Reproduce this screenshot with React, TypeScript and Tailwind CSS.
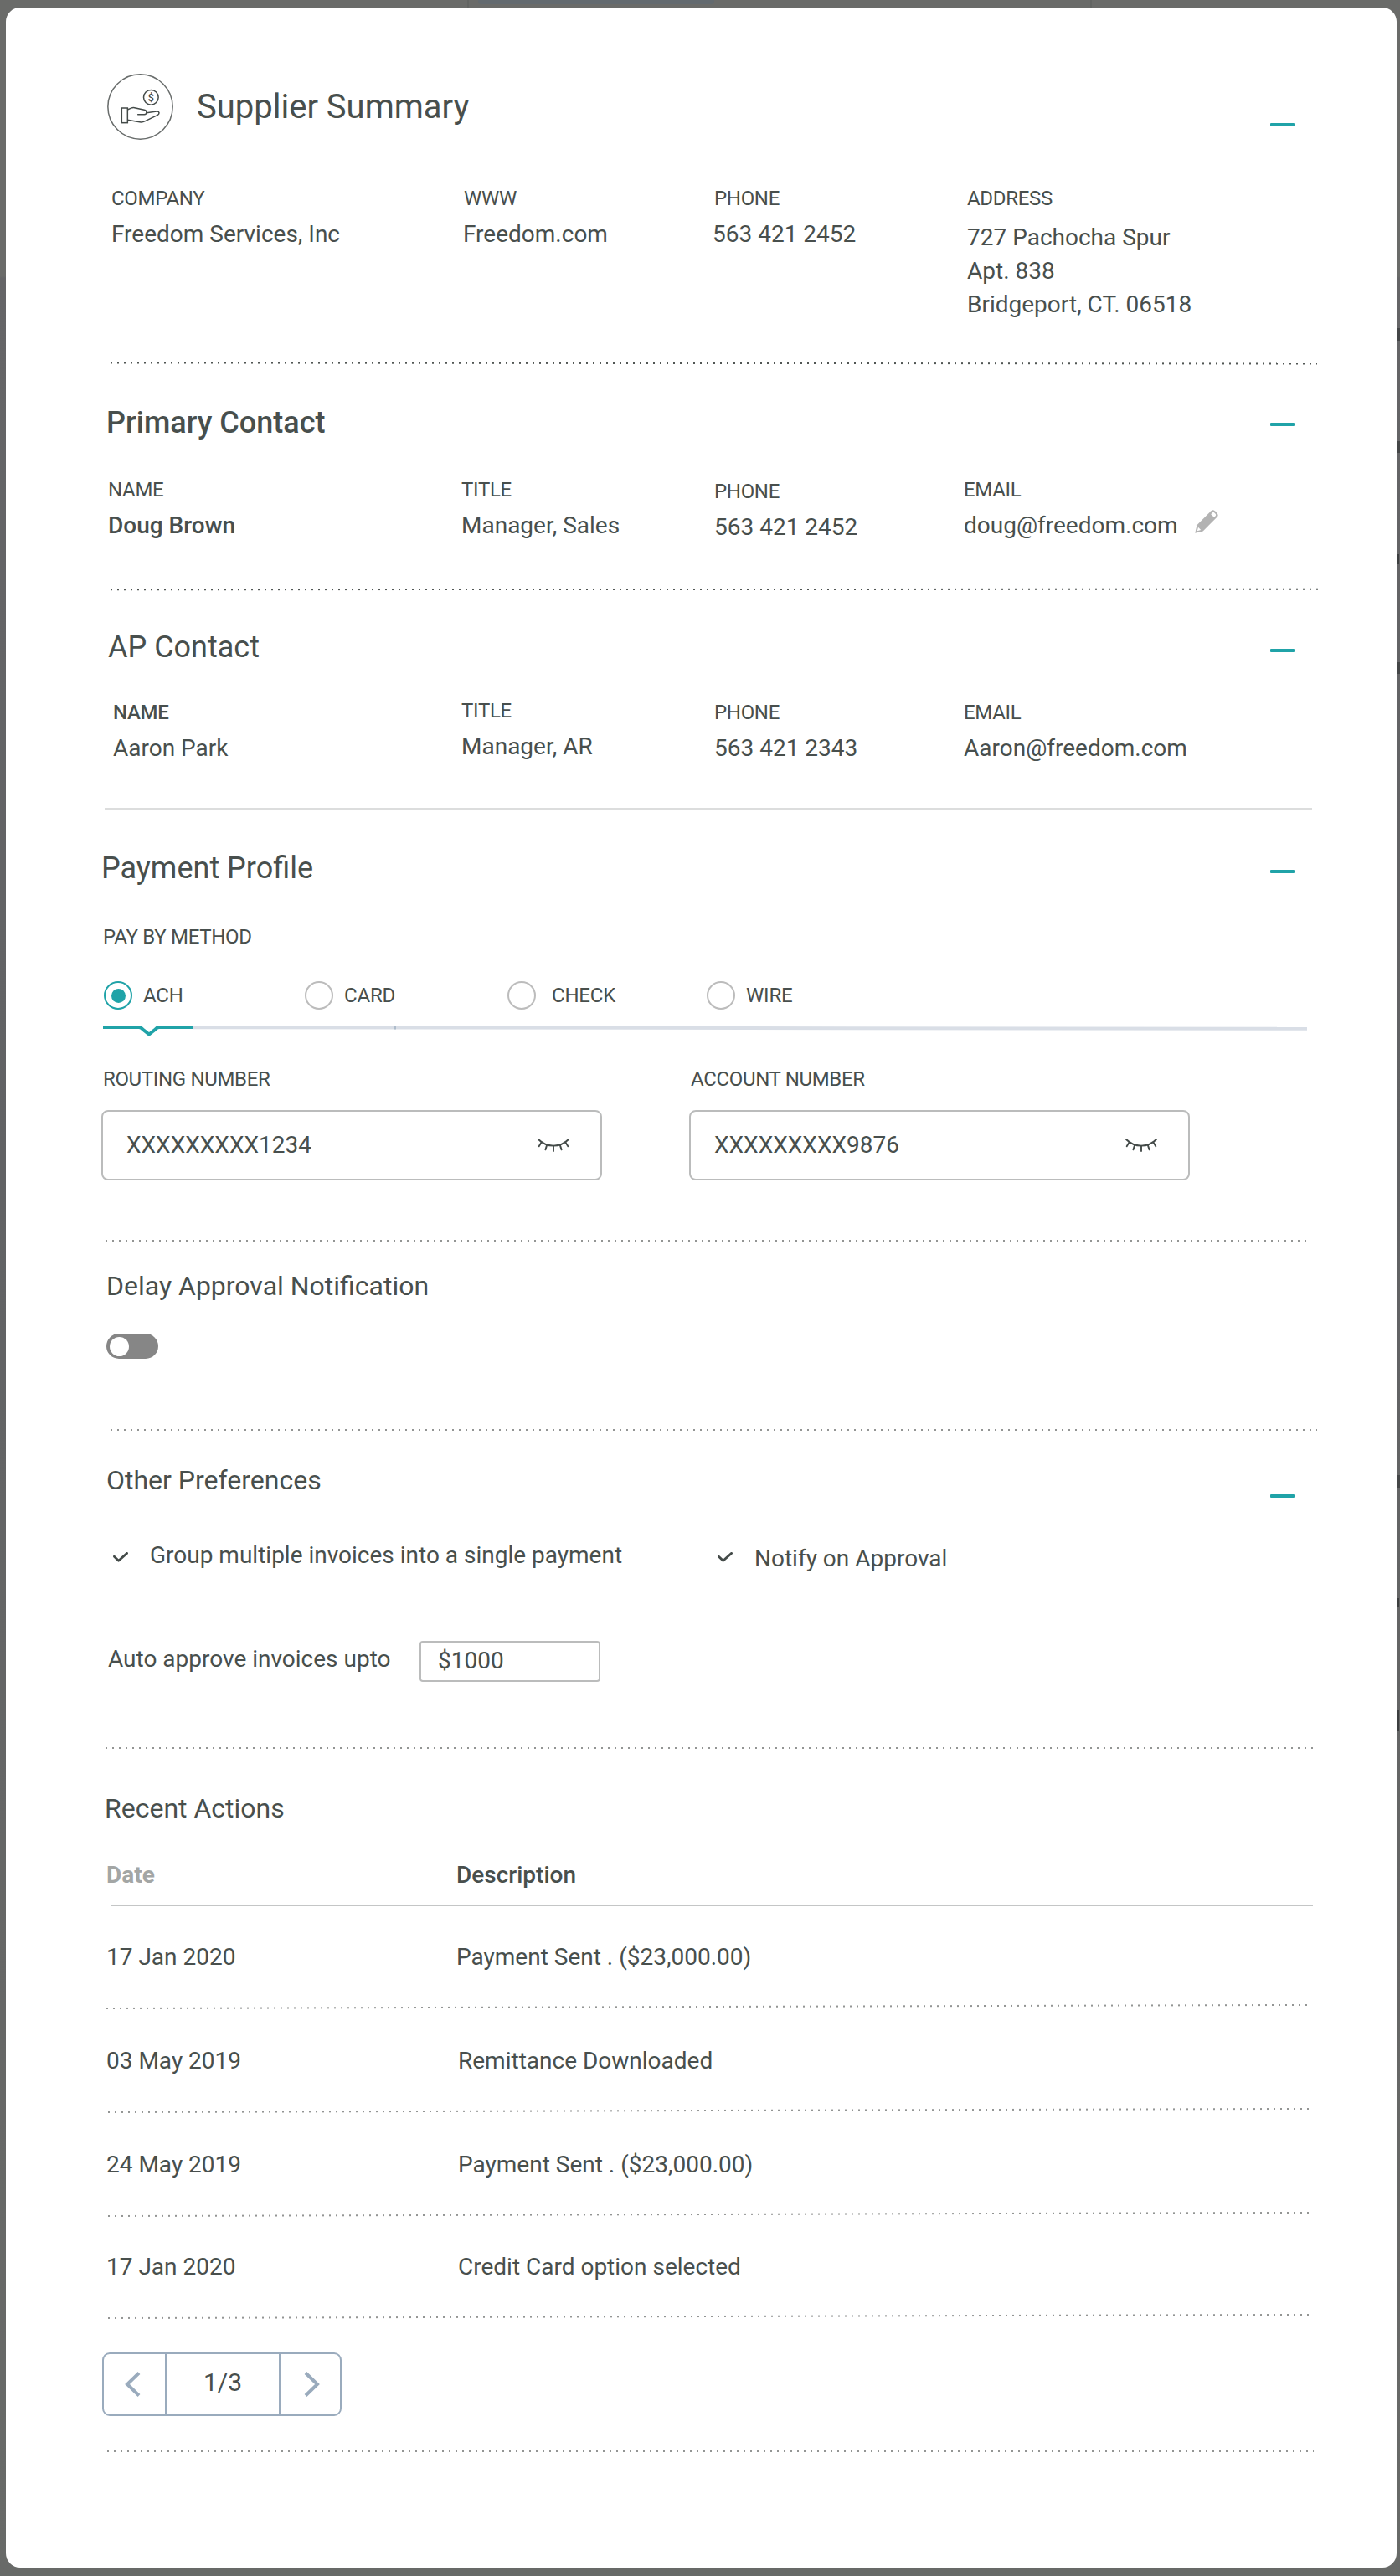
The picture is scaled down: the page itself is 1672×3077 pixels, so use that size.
import type { ReactNode } from "react";

const dark =
  "bg-[repeating-linear-gradient(90deg,#515654_0_2px,transparent_2px_8px)]";
const light =
  "bg-[repeating-linear-gradient(90deg,#939594_0_2px,transparent_2px_8px)]";

function Dots({ className }: { className: string }) {
  return <div className={`h-[2px] shrink-0 ${className}`} />;
}

function Minus({ className }: { className: string }) {
  return (
    <button
      aria-label="Collapse"
      className={`mr-[121px] ml-auto block h-1 w-[30px] rounded-[1px] bg-[#20a3a8] ${className}`}
    />
  );
}

function Field({
  label,
  children,
  className = "",
  labelClass = "",
  valueClass = "",
}: {
  label: string;
  children: ReactNode;
  className?: string;
  labelClass?: string;
  valueClass?: string;
}) {
  return (
    <div className={className}>
      <div className={`text-[24px] leading-[28px] tracking-[-0.3px] ${labelClass}`}>{label}</div>
      <div className={`mt-[9px] text-[28px] leading-[40px] ${valueClass}`}>{children}</div>
    </div>
  );
}

function HandCoin() {
  return (
    <svg className="h-[79px] w-[79px] shrink-0" viewBox="55 53 237 237" fill="none" stroke="#444b49" strokeWidth="4.5">
      <circle cx="173.5" cy="171.5" r="116" stroke="#686c6b" />
      <rect x="107" y="176" width="21" height="53" />
      <path
        d="M128 182 Q138 178 145 175 Q149 174 153 175 L188 183 Q197 185 196 193 L232 188 Q240 187 241 193 Q241 198 236 201 L191 223 Q184 227 176 227 L128 219"
        strokeLinejoin="round"
      />
      <path d="M165 199 H188 Q196 199 196 192" strokeLinecap="round" />
      <circle cx="212" cy="138" r="26.5" />
      <text
        x="212"
        y="151"
        textAnchor="middle"
        fontSize="38"
        fontFamily="Roboto, sans-serif"
        fontWeight="500"
        fill="#444b49"
        stroke="none"
      >
        $
      </text>
    </svg>
  );
}

function Pencil() {
  return (
    <svg className="h-7 w-7" viewBox="0 0 28 28">
      <path
        d="M.3 27.7 2.4 18.2 19.4 1.3Q21.5-.6 23.8 1.3L26.6 4.1Q28.6 6.4 26.6 8.6L9.7 25.5Z"
        fill="#b3b3b3"
      />
      <path d="M19.2 5.2 21 3.3Q22.1 2.4 23.1 3.3L24.8 4.9Q25.6 6 24.8 7L23 8.9Z" fill="#fff" />
      <path d="M2.8 25.3 4 20.8 7.2 24.1Z" fill="#fff" />
    </svg>
  );
}

function ClosedEye() {
  return (
    <svg
      className="h-4 w-[38px]"
      viewBox="0 0 38 16"
      fill="none"
      stroke="#444b49"
      strokeWidth="1.9"
      strokeLinecap="round"
    >
      <path d="M1 1Q8.5 8.6 19 8.6T37 1" />
      <path d="M4.6 4.4 1.7 9.2M11.2 7.6 9.4 13.4M19 8.6V15M26.8 7.6 28.6 13.4M33.4 4.4 36.3 9.2" />
    </svg>
  );
}

function Check({ className }: { className: string }) {
  return (
    <svg className={`h-3 w-[18px] shrink-0 ${className}`} viewBox="0 0 18 12" fill="none" stroke="#444b49" strokeWidth="2.8">
      <path d="M1.400 5.200 6.600 10.200 16.600 1.400" strokeLinejoin="round" strokeLinecap="round" />
    </svg>
  );
}

function Radio({ label, checked, className, gap }: { label: string; checked?: boolean; className: string; gap: string }) {
  return (
    <label className={`flex h-[34px] items-center ${className}`}>
      <span
        className={`flex h-[34px] w-[34px] items-center justify-center rounded-full border-2 ${
          checked ? "border-[#20a3a8]" : "border-[#bcbcbc]"
        }`}
      >
        {checked && <span className="h-[17px] w-[17px] rounded-full bg-[#20a3a8]" />}
      </span>
      <span className={`text-[24px] leading-[34px] tracking-[-0.2px] ${gap}`}>{label}</span>
    </label>
  );
}

function SecretInput({ label, value, labelClass }: { label: string; value: string; labelClass: string }) {
  return (
    <div className="w-[598px]">
      <div className={`text-[24px] leading-[28px] tracking-[-0.34px] ${labelClass}`}>{label}</div>
      <div className="mt-[23px] flex h-[84px] items-center justify-between rounded-[8px] border-2 border-[#bbbcbc] pr-[37px] pl-[28px]">
        <span className="text-[28px] leading-[40px]">{value}</span>
        <ClosedEye />
      </div>
    </div>
  );
}

function ActionRow({ date, text, className, textClass }: { date: string; text: string; className: string; textClass: string }) {
  return (
    <div className={`flex pl-[120px] text-[28px] leading-[36px] ${className}`}>
      <span className="w-[418px]">{date}</span>
      <span className={textClass}>{text}</span>
    </div>
  );
}

// Slivers of the dimmed page that stay visible around the dialog.
function Backdrop() {
  return (
    <div aria-hidden="true">
      <div className="absolute top-0 left-[558px] h-[9px] w-[2px] bg-[#626462]" />
      <div className="absolute top-0 left-[571px] h-[5px] w-[282px] rounded-b-[4px] bg-[#636a6f]" />
      <div className="absolute top-0 left-[1302px] h-[9px] w-[2px] bg-[#626462]" />
      <div className="absolute top-[392px] left-[1669px] h-[15px] w-[3px] bg-[#444647]" />
      <div className="absolute top-[527px] left-[1669px] h-[14px] w-[3px] bg-[#444647]" />
      <div className="absolute top-[662px] left-[1669px] h-[12px] w-[2px] bg-[#3c3e3f]" />
      <div className="absolute top-[791px] left-[1669px] h-[14px] w-[3px] bg-[#444647]" />
      <div className="absolute top-[1762px] left-[1669px] h-[15px] w-[3px] bg-[#444647]" />
      <div className="absolute top-[1909px] left-[1669px] h-[10px] w-[2px] bg-[#3c3e3f]" />
      <div className="absolute top-[2043px] left-[1669px] h-[25px] w-[2px] bg-[#3c3e3f]" />
    </div>
  );
}

export default function App() {
  return (
    <div className="relative h-[3077px] w-[1672px] overflow-hidden bg-[linear-gradient(180deg,#6a6b69_0px,#6a6b69_330px,#656567_332px,#616264_1400px,#666766_2400px,#686a68_3077px)] pt-[9px] pl-[7px] font-['Roboto',sans-serif] text-[#484f4d]">
      <Backdrop />
      <main className="flex h-[3058px] w-[1661px] flex-col rounded-[17px] bg-white">
        <section className="h-[424px] shrink-0 pt-[79px]">
          <div className="flex items-start pl-[121px]">
            <HandCoin />
            <h1 className="ml-[28px] pt-[1px] text-[40px] leading-[78px]">Supplier Summary</h1>
            <Minus className="mt-[59px]" />
          </div>
          <div className="mt-[56px] grid grid-cols-[420px_299px_303px_1fr] pl-[126px]">
            <Field label="COMPANY">Freedom Services, Inc</Field>
            <Field label="WWW" labelClass="pl-[1px]">Freedom.com</Field>
            <Field label="PHONE" labelClass="pl-[1px]" valueClass="-ml-px">563 421 2452</Field>
            <Field label="ADDRESS" valueClass="pt-[4px]">
              727 Pachocha Spur
              <br />
              Apt. 838
              <br />
              Bridgeport, CT. 06518
            </Field>
          </div>
        </section>
        <Dots className={`ml-[125px] w-[1441px] rotate-[0.04deg] ${dark}`} />

        <section className="h-[268px] shrink-0 pt-[48px]">
          <div className="flex h-[44px] items-start pl-[120px]">
            <h2 className="text-[36px] leading-[44px] font-medium">Primary Contact</h2>
            <Minus className="mt-[22px]" />
          </div>
          <div className="mt-[44px] grid grid-cols-[422px_302px_298px_1fr] pl-[122px]">
            <Field label="NAME" valueClass="font-medium">Doug Brown</Field>
            <Field label="TITLE">Manager, Sales</Field>
            <Field label="PHONE" className="pt-[2px]">563 421 2452</Field>
            <Field label="EMAIL" valueClass="flex items-start">
              doug@freedom.com
              <span className="mt-[1px] ml-[20px]">
                <Pencil />
              </span>
            </Field>
          </div>
        </section>
        <Dots className={`ml-[125px] w-[1442px] rotate-[-0.02deg] ${dark}`} />

        <section className="h-[260px] shrink-0 pt-[46px]">
          <div className="flex h-[44px] items-start pl-[122px]">
            <h2 className="text-[36px] leading-[44px]">AP Contact</h2>
            <Minus className="mt-[24px]" />
          </div>
          <div className="mt-[40px] grid grid-cols-[416px_302px_298px_1fr] pl-[128px]">
            <Field label="NAME" className="pt-[2px]" labelClass="font-medium">Aaron Park</Field>
            <Field label="TITLE">Manager, AR</Field>
            <Field label="PHONE" className="pt-[2px]">563 421 2343</Field>
            <Field label="EMAIL" className="pt-[2px]">Aaron@freedom.com</Field>
          </div>
        </section>
        <div className="ml-[118px] h-[2px] w-[1442px] shrink-0 bg-[#dcdddd]" />

        <section className="h-[514px] shrink-0 pt-[48px]">
          <div className="flex h-[44px] items-start pl-[114px]">
            <h2 className="text-[36px] leading-[44px]">Payment Profile</h2>
            <Minus className="mt-[24px]" />
          </div>
          <div className="mt-[46px] pl-[116px] text-[24px] leading-[28px] tracking-[-0.3px]">PAY BY METHOD</div>
          <div className="mt-[39px] flex pl-[117px]">
            <Radio label="ACH" checked className="w-[240px]" gap="ml-[13px]" />
            <Radio label="CARD" className="w-[242px]" gap="ml-[13px]" />
            <Radio label="CHECK" className="w-[238px]" gap="ml-[19px]" />
            <Radio label="WIRE" className="" gap="ml-[13px]" />
          </div>
          <div className="mt-[19px] flex h-[14px] items-start pl-[116px]">
            <svg className="h-[14px] w-[108px]" viewBox="0 0 108 14" fill="none" stroke="#20a3a8" strokeWidth="4">
              <path d="M0 2H43Q45.500 2 47.500 4.500L55 10.500 62.500 4.500Q64.500 2 67 2H108" />
            </svg>
            <div className="mt-[1px] flex h-1 w-[1330px] rotate-[0.06deg] bg-[#d9dee6]">
              <div className="ml-[240px] h-1 w-[2px] bg-[#aebccb]" />
            </div>
          </div>
          <div className="mt-[36px] flex gap-[104px] pl-[114px]">
            <SecretInput label="ROUTING NUMBER" value="XXXXXXXXX1234" labelClass="pl-[2px]" />
            <SecretInput label="ACCOUNT NUMBER" value="XXXXXXXXX9876" labelClass="pl-[2px]" />
          </div>
        </section>
        <Dots className={`ml-[119px] w-[1434px] ${light}`} />

        <section className="h-[224px] shrink-0 pt-[33px] pl-[120px]">
          <h3 className="text-[32px] leading-[40px]">Delay Approval Notification</h3>
          <div className="mt-[37px] flex h-[30px] w-[62px] items-center rounded-full bg-[#868686] pl-[4px]">
            <span className="h-[23px] w-[23px] rounded-full bg-white" />
          </div>
        </section>
        <Dots className={`ml-[125px] w-[1441px] ${light}`} />

        <section className="h-[378px] shrink-0 pt-[39px]">
          <div className="flex h-[40px] items-start pl-[120px]">
            <h3 className="text-[32px] leading-[40px]">Other Preferences</h3>
            <Minus className="mt-[37px]" />
          </div>
          <div className="mt-[52px] flex h-[40px] items-start pl-[128px] text-[28px] leading-[36px]">
            <div className="flex w-[722px] items-start">
              <Check className="mt-[14px]" />
              <span className="ml-[26px]">Group multiple invoices into a single payment</span>
            </div>
            <Check className="mt-[14px]" />
            <span className="mt-1 ml-[26px]">Notify on Approval</span>
          </div>
          <div className="mt-[80px] flex items-start pl-[122px] text-[28px]">
            <span className="-mt-[2px] w-[372px] leading-[48px]">Auto approve invoices upto</span>
            <div className="h-[49px] w-[216px] rounded-[4px] border-2 border-[#bbbcbc] pl-[20px] leading-[44px]">
              $1000
            </div>
          </div>
        </section>
        <Dots className={`ml-[119px] w-[1442px] ${light}`} />

        <section className="shrink-0 pt-[51px]">
          <h3 className="pl-[118px] text-[32px] leading-[40px]">Recent Actions</h3>
          <div className="mt-[42px] flex pl-[120px] text-[28px] leading-[36px]">
            <span className="w-[418px] font-bold text-[#a3a6a5]">Date</span>
            <span className="font-medium">Description</span>
          </div>
          <div className="mt-[17px] ml-[125px] h-[2px] w-[1436px] bg-[#c4c6c6]" />
          <ActionRow className="mt-[43px]" date="17 Jan 2020" text="Payment Sent . ($23,000.00)" textClass="" />
          <Dots className={`mt-[40px] ml-[120px] w-[1435px] rotate-[-0.16deg] ${light}`} />
          <ActionRow className="mt-[46px]" date="03 May 2019" text="Remittance Downloaded" textClass="ml-[2px]" />
          <Dots className={`mt-[40px] ml-[122px] w-[1434px] rotate-[-0.16deg] ${light}`} />
          <ActionRow className="mt-[46px]" date="24 May 2019" text="Payment Sent . ($23,000.00)" textClass="ml-[2px]" />
          <Dots className={`mt-[40px] ml-[122px] w-[1434px] rotate-[-0.16deg] ${light}`} />
          <ActionRow className="mt-[44px]" date="17 Jan 2020" text="Credit Card option selected" textClass="ml-[2px]" />
          <Dots className={`mt-[40px] ml-[122px] w-[1434px] rotate-[-0.16deg] ${light}`} />
          <div className="mt-[42px] ml-[115px] flex h-[76px] w-[286px] rounded-[9px] border-2 border-[#9aabbd]">
            <button aria-label="Previous" className="flex w-[73px] items-center justify-center pr-[4px]">
              <svg className="h-[30px] w-[19px]" viewBox="0 0 19 30" fill="none" stroke="#9aabbd" strokeWidth="4">
                <path d="M17 1.500 3 15 17 28.500" />
              </svg>
            </button>
            <div className="w-[138px] border-x-2 border-[#9aabbd] text-center text-[30px] leading-[67px]">1/3</div>
            <button aria-label="Next" className="flex w-[71px] items-center justify-center pl-[3px]">
              <svg className="h-[30px] w-[19px]" viewBox="0 0 19 30" fill="none" stroke="#9aabbd" strokeWidth="4">
                <path d="M2 1.500 16 15 2 28.500" />
              </svg>
            </button>
          </div>
          <Dots className={`mt-[41px] ml-[121px] w-[1441px] ${light}`} />
        </section>
      </main>
    </div>
  );
}
